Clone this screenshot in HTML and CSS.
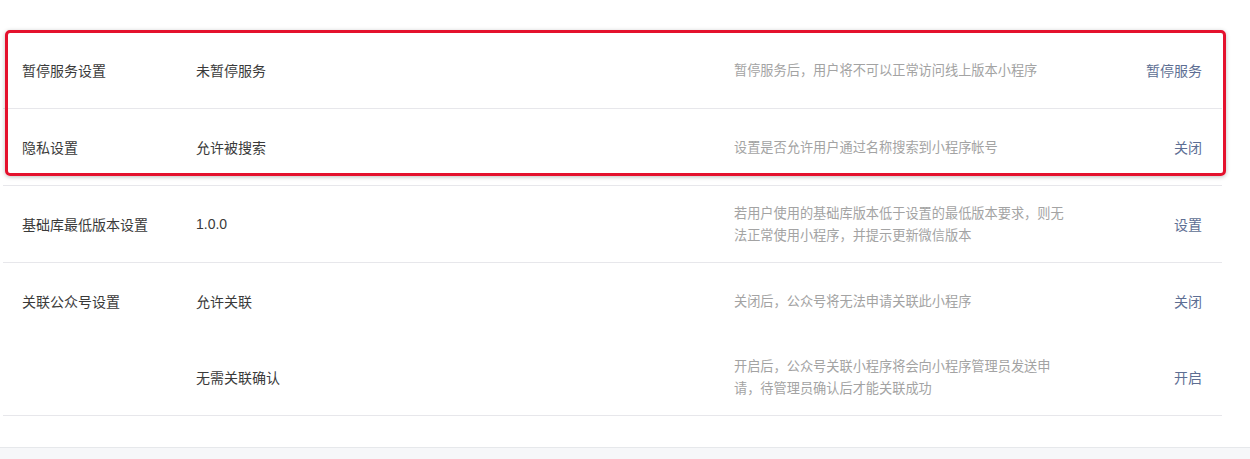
FILE: index.html
```html
<!DOCTYPE html>
<html lang="zh-CN">
<head>
<meta charset="utf-8">
<title>设置</title>
<link rel="stylesheet" href="styles.css">
</head>
<body>
<div class="page">
  <div class="settings">
    <div class="row">
      <div class="label">暂停服务设置</div>
      <div class="value">未暂停服务</div>
      <div class="desc"><p>暂停服务后，用户将不可以正常访问线上版本小程序</p></div>
      <a class="action">暂停服务</a>
    </div>
    <div class="row">
      <div class="label">隐私设置</div>
      <div class="value">允许被搜索</div>
      <div class="desc"><p>设置是否允许用户通过名称搜索到小程序帐号</p></div>
      <a class="action">关闭</a>
    </div>
    <div class="row">
      <div class="label">基础库最低版本设置</div>
      <div class="value num">1.0.0</div>
      <div class="desc"><p>若用户使用的基础库版本低于设置的最低版本要求，则无法正常使用小程序，并提示更新微信版本</p></div>
      <a class="action">设置</a>
    </div>
    <div class="row">
      <div class="label">关联公众号设置</div>
      <div class="value">允许关联</div>
      <div class="desc"><p>关闭后，公众号将无法申请关联此小程序</p></div>
      <a class="action">关闭</a>
      <div class="label"></div>
      <div class="value">无需关联确认</div>
      <div class="desc"><p>开启后，公众号关联小程序将会向小程序管理员发送申请，待管理员确认后才能关联成功</p></div>
      <a class="action">开启</a>
    </div>
    <div class="highlight"></div>
  </div>
  <div class="footer"></div>
</div>
</body>
</html>
```

FILE: styles.css
```css
html, body {
  margin: 0;
  padding: 0;
  background: #ffffff;
}

body {
  font-family: "Noto Sans CJK SC", "Noto Sans", sans-serif;
  color: #353535;
  font-size: 14px;
}

.page {
  display: flex;
  flex-direction: column;
  min-height: 459px;
}

.settings {
  position: relative;
  margin: 32px 0 31px 3px;
  width: 1219px;
}

.row {
  display: grid;
  grid-template-columns: 174px 538px 1fr auto;
  grid-auto-rows: 76px;
  align-items: center;
  padding: 0 20px 0 19px;
  border-bottom: 1px solid #e7e7eb;
}

.label,
.value {
  font-size: 14px;
  color: #3a3a3a;
  line-height: 20px;
}

.value.num {
  font-family: "Liberation Sans", "Noto Sans", sans-serif;
}

.desc p {
  margin: 0;
  width: 334px;
  font-size: 13.2px;
  line-height: 22px;
  color: #a3a3a3;
}

.action {
  font-size: 14px;
  color: #5d6e93;
  text-decoration: none;
  cursor: pointer;
  justify-self: end;
}

.highlight {
  position: absolute;
  left: 2px;
  top: -2px;
  width: 1221px;
  height: 146px;
  box-sizing: border-box;
  border: 3px solid #e4112d;
  border-radius: 5px;
  box-shadow: 0 1px 4px rgba(0, 0, 0, 0.25);
  pointer-events: none;
}

.footer {
  flex: 1;
  background: #f6f7f9;
  border-top: 1px solid #e6e8eb;
}
```
